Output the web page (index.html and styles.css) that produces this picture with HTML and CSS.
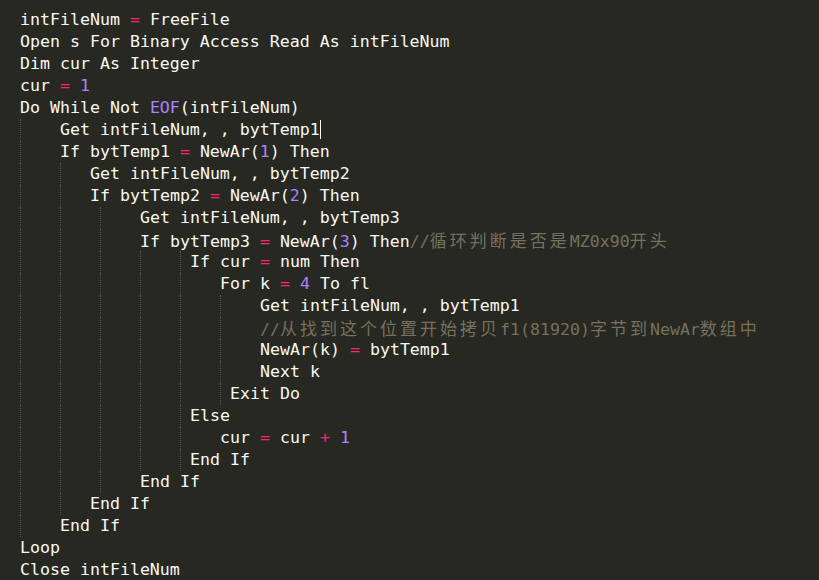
FILE: index.html
```html
<!DOCTYPE html>
<html>
<head>
<meta charset="utf-8">
<link rel="stylesheet" href="styles.css">
</head>
<body>
<div class="editor">
  <div class="line"><span class="code">intFileNum <span class="op">=</span> FreeFile</span></div>
  <div class="line"><span class="code">Open s For Binary Access Read As intFileNum</span></div>
  <div class="line"><span class="code">Dim cur As Integer</span></div>
  <div class="line"><span class="code">cur <span class="op">=</span> <span class="num">1</span></span></div>
  <div class="line"><span class="code">Do While Not <span class="num">EOF</span>(intFileNum)</span></div>
  <div class="line"><span class="tab"></span><span class="code">Get intFileNum, , bytTemp1<span class="caret"></span></span></div>
  <div class="line"><span class="tab"></span><span class="code">If bytTemp1 <span class="op">=</span> NewAr(<span class="num">1</span>) Then</span></div>
  <div class="line"><span class="tab"></span><span class="tab t3"></span><span class="code">Get intFileNum, , bytTemp2</span></div>
  <div class="line"><span class="tab"></span><span class="tab t3"></span><span class="code">If bytTemp2 <span class="op">=</span> NewAr(<span class="num">2</span>) Then</span></div>
  <div class="line"><span class="tab"></span><span class="tab"></span><span class="tab"></span><span class="code">Get intFileNum, , bytTemp3</span></div>
  <div class="line"><span class="tab"></span><span class="tab"></span><span class="tab"></span><span class="code">If bytTemp3 <span class="op">=</span> NewAr(<span class="num">3</span>) Then<span class="cmt">//<span class="cjk">循环判断是否是</span>MZ0x90<span class="cjk">开头</span></span></span></div>
  <div class="line"><span class="tab"></span><span class="tab"></span><span class="tab"></span><span class="tab"></span><span class="tab t1"></span><span class="code">If cur <span class="op">=</span> num Then</span></div>
  <div class="line"><span class="tab"></span><span class="tab"></span><span class="tab"></span><span class="tab"></span><span class="tab"></span><span class="code">For k <span class="op">=</span> <span class="num">4</span> To fl</span></div>
  <div class="line"><span class="tab"></span><span class="tab"></span><span class="tab"></span><span class="tab"></span><span class="tab"></span><span class="tab"></span><span class="code">Get intFileNum, , bytTemp1</span></div>
  <div class="line"><span class="tab"></span><span class="tab"></span><span class="tab"></span><span class="tab"></span><span class="tab"></span><span class="tab"></span><span class="code"><span class="cmt">//<span class="cjk">从找到这个位置开始拷贝</span>f1(81920)<span class="cjk">字节到</span>NewAr<span class="cjk">数组中</span></span></span></div>
  <div class="line"><span class="tab"></span><span class="tab"></span><span class="tab"></span><span class="tab"></span><span class="tab"></span><span class="tab"></span><span class="code">NewAr(k) <span class="op">=</span> bytTemp1</span></div>
  <div class="line"><span class="tab"></span><span class="tab"></span><span class="tab"></span><span class="tab"></span><span class="tab"></span><span class="tab"></span><span class="code">Next k</span></div>
  <div class="line"><span class="tab"></span><span class="tab"></span><span class="tab"></span><span class="tab"></span><span class="tab"></span><span class="tab t1"></span><span class="code">Exit Do</span></div>
  <div class="line"><span class="tab"></span><span class="tab"></span><span class="tab"></span><span class="tab"></span><span class="tab t1"></span><span class="code">Else</span></div>
  <div class="line"><span class="tab"></span><span class="tab"></span><span class="tab"></span><span class="tab"></span><span class="tab"></span><span class="code">cur <span class="op">=</span> cur <span class="op">+</span> <span class="num">1</span></span></div>
  <div class="line"><span class="tab"></span><span class="tab"></span><span class="tab"></span><span class="tab"></span><span class="tab t1"></span><span class="code">End If</span></div>
  <div class="line"><span class="tab"></span><span class="tab"></span><span class="tab"></span><span class="code">End If</span></div>
  <div class="line"><span class="tab"></span><span class="tab t3"></span><span class="code">End If</span></div>
  <div class="line"><span class="tab"></span><span class="code">End If</span></div>
  <div class="line"><span class="code">Loop</span></div>
  <div class="line"><span class="code">Close intFileNum</span></div>
</div>
</body>
</html>
```

FILE: styles.css
```css
html, body {
  margin: 0;
  padding: 0;
  background: #272822;
  height: 100%;
  overflow: hidden;
}
.editor {
  padding: 9px 0 0 20px;
  font-family: "DejaVu Sans Mono", "Liberation Mono", "Noto Sans CJK SC", monospace;
  font-size: 16.6px;
  color: #f8f8f2;
}
.line {
  display: flex;
  height: 22px;
  line-height: 22px;
  white-space: pre;
}
.tab {
  flex: none;
  width: 39px;
  height: 22px;
  border-left: 1px dotted #55554c;
}
.tab.t3 { width: 29px; }
.tab.t1 { width: 9px; }
.code { flex: none; }
.op { color: #f92672; }
.num { color: #ae81ff; }
.cmt { color: #75715e; }
.cjk {
  font-family: "Noto Sans CJK SC", sans-serif;
  font-size: 17px;
  letter-spacing: 3px;
}
.caret {
  display: inline-block;
  width: 0;
  height: 19px;
  border-left: 1px solid #f8f8f0;
  vertical-align: -4px;
}
```
